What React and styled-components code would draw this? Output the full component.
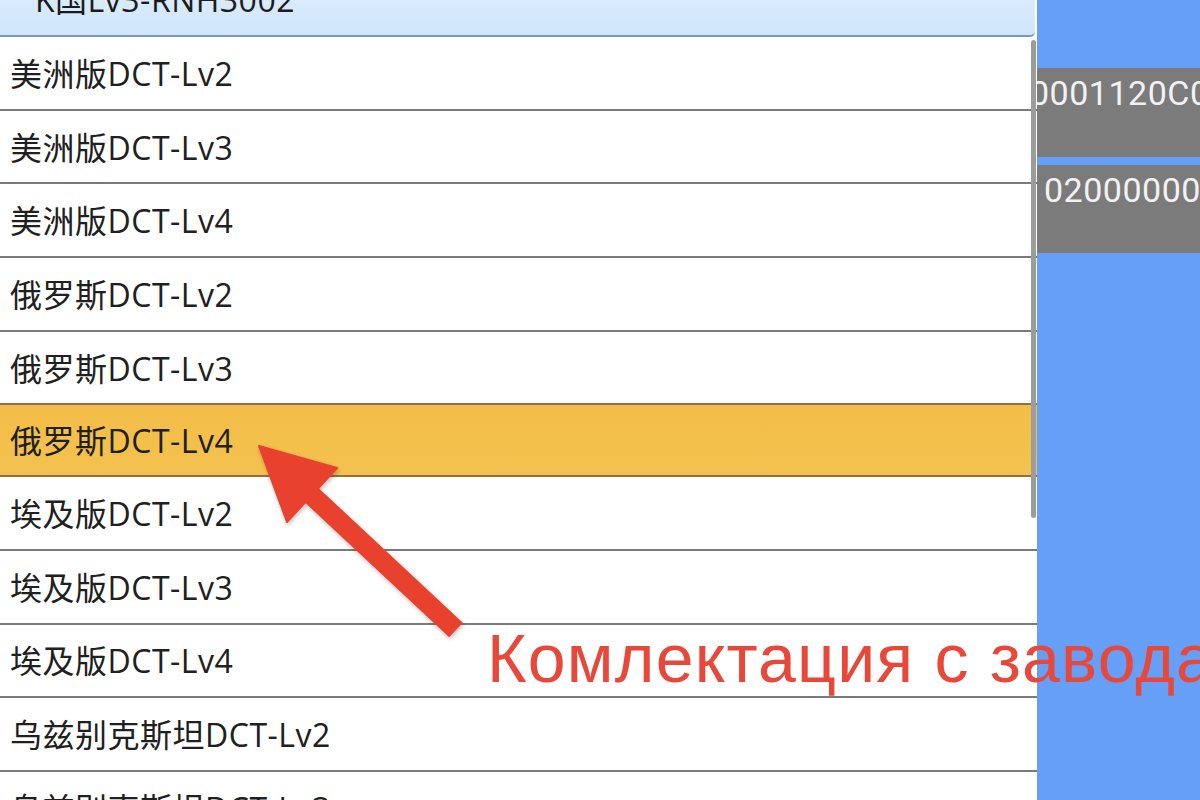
import React from 'react';
import styled, { createGlobalStyle } from 'styled-components';

const GlobalStyle = createGlobalStyle`
  html, body {
    margin: 0;
    padding: 0;
    width: 1200px;
    height: 800px;
    overflow: hidden;
    background: #659ff7;
  }
  * { box-sizing: border-box; }
`;

const Screen = styled.div`
  position: relative;
  width: 1200px;
  height: 800px;
  display: flex;
  overflow: hidden;
  font-family: "Open Sans", "Noto Sans CJK SC", sans-serif;
`;

const ListPanel = styled.div`
  position: relative;
  width: 1037px;
  flex: none;
  display: flex;
  flex-direction: column;
  background: #ffffff;
`;

const Header = styled.div`
  height: 37px;
  flex: none;
  width: 1035px;
  background: linear-gradient(#d9ebfc, #d1e6fb);
  border-bottom: 2px solid #7f98b6;
  border-bottom-right-radius: 5px;
  padding-left: 35px;
  overflow: hidden;
  font-size: 32px;
  line-height: 32px;
  letter-spacing: 0.5px;
  color: #1c1c1c;
  white-space: nowrap;

  span {
    display: block;
    margin-top: -16px;
  }
`;

const Row = styled.div`
  height: 73.7px;
  flex: none;
  display: flex;
  align-items: center;
  padding-left: 10px;
  padding-bottom: 2px;
  font-size: 32px;
  letter-spacing: 0.5px;
  color: #202020;
  white-space: nowrap;
  width: 1037px;
  background: ${p => (p.$active ? 'linear-gradient(#f3bd48, #f4c24f)' : '#ffffff')};
  border-bottom: 2px solid ${p => (p.$active ? '#8d7044' : '#7a7a7a')};
  margin-top: ${p => (p.$active ? '-2px' : '0')};
  border-top: ${p => (p.$active ? '2px solid #8d7044' : 'none')};
`;

const ScrollThumb = styled.div`
  position: absolute;
  left: 1031px;
  top: 40px;
  width: 5px;
  height: 478px;
  border-radius: 3px;
  background: #9c9c9c;
`;

const SidePanel = styled.div`
  flex: 1;
  display: flex;
  flex-direction: column;
  gap: 8px;
  padding-top: 68px;
  overflow: hidden;
`;

const CodeBox = styled.div`
  height: ${p => p.$h}px;
  background: #7b7b7b;
  color: #f2f2f2;
  font-family: Roboto, sans-serif;
  font-size: 34px;
  line-height: 34px;
  padding-top: 8px;
  padding-left: 7px;
  white-space: nowrap;
  overflow: hidden;
  letter-spacing: 0.5px;

  span {
    display: block;
    margin-left: ${p => p.$shift || 0}px;
  }
`;

const Overlay = styled.svg`
  position: absolute;
  left: 0;
  top: 0;
  pointer-events: none;
`;

const Caption = styled.div`
  position: absolute;
  left: 487px;
  top: 624px;
  font-family: "Liberation Sans", Arial, sans-serif;
  font-size: 68px;
  line-height: 68px;
  letter-spacing: 1.2px;
  color: #e8483a;
  white-space: nowrap;
`;

const rows = [
  '美洲版DCT-Lv2',
  '美洲版DCT-Lv3',
  '美洲版DCT-Lv4',
  '俄罗斯DCT-Lv2',
  '俄罗斯DCT-Lv3',
  '俄罗斯DCT-Lv4',
  '埃及版DCT-Lv2',
  '埃及版DCT-Lv3',
  '埃及版DCT-Lv4',
  '乌兹别克斯坦DCT-Lv2',
  '乌兹别克斯坦DCT-Lv3',
];

export default function App() {
  return (
    <>
      <GlobalStyle />
      <Screen>
        <ListPanel>
          <Header><span>K国Lv3-RNH3002</span></Header>
          {rows.map((r, i) => (
            <Row key={r} $active={i === 5}>{r}</Row>
          ))}
          <ScrollThumb />
        </ListPanel>
        <SidePanel>
          <CodeBox $h={89} $shift={-14}><span>0001120C00</span></CodeBox>
          <CodeBox $h={88}><span>02000000</span></CodeBox>
        </SidePanel>

        <Overlay width="1200" height="800" viewBox="0 0 1200 800">
          <defs>
            <filter id="sh" x="-20%" y="-20%" width="140%" height="140%">
              <feDropShadow dx="1" dy="2" stdDeviation="2" floodColor="#000" floodOpacity="0.25" />
            </filter>
          </defs>
          <g fill="#e8432e" stroke="#e8432e" filter="url(#sh)">
            <line x1="305" y1="489" x2="456" y2="630" strokeWidth="20" />
            <polygon points="259,446 337,468 287,522" strokeWidth="2" strokeLinejoin="round" />
          </g>
        </Overlay>
        <Caption>Комлектация с завода</Caption>
      </Screen>
    </>
  );
}
